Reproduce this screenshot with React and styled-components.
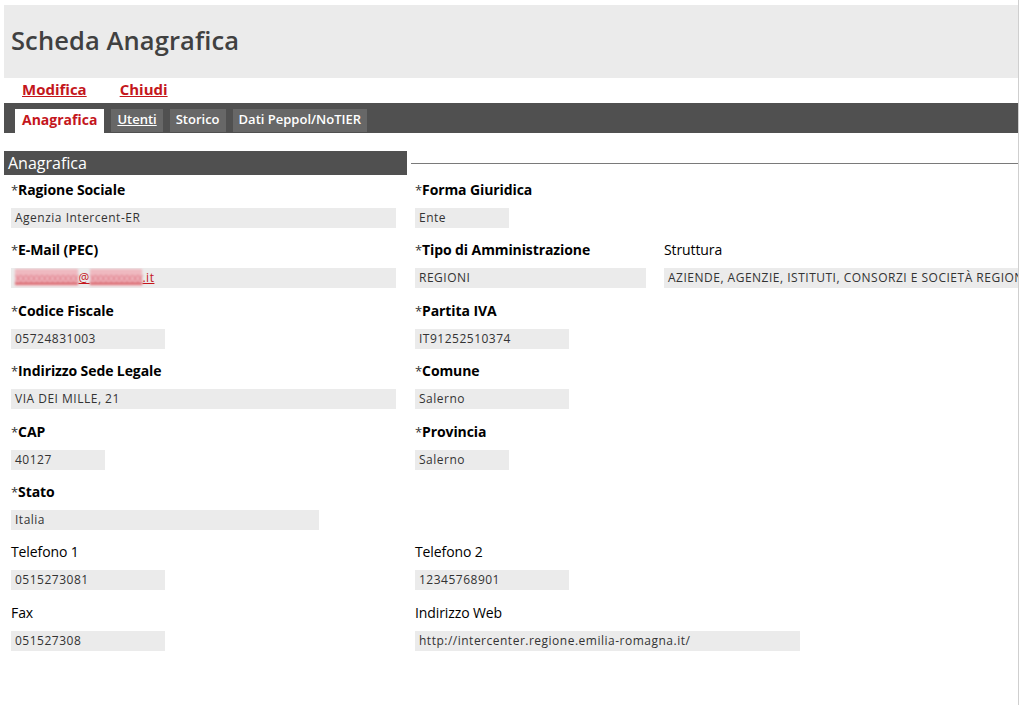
import React from "react";
import styled, { createGlobalStyle } from "styled-components";

const GlobalStyle = createGlobalStyle`
  html, body {
    margin: 0;
    padding: 0;
    background: #fff;
  }
  body {
    font-family: "Open Sans", "DejaVu Sans", sans-serif;
  }
`;

const Frame = styled.div`
  width: 1019px;
  height: 705px;
  padding: 5px 0 0 4px;
  box-sizing: border-box;
  border-right: 1px solid #cfcfcf;
  overflow: hidden;
`;

const Header = styled.div`
  height: 73px;
  background: #ebebeb;
  display: flex;
  align-items: center;
  padding: 0 7px 4px;
  box-sizing: border-box;
`;

const Title = styled.h1`
  margin: 0;
  font-size: 25.5px;
  font-weight: 600;
  color: #404040;
  letter-spacing: 0.1px;
`;

const Actions = styled.div`
  height: 25px;
  display: flex;
  align-items: center;
  gap: 33px;
  padding: 0 0 3px 18px;
  box-sizing: border-box;
`;

const ActionLink = styled.a`
  color: #c4161c;
  font-size: 15px;
  font-weight: 700;
  text-decoration: underline;
  cursor: pointer;
`;

const TabBar = styled.div`
  height: 30px;
  background: #505050;
  display: flex;
  align-items: flex-end;
  gap: 7px;
  padding: 0 0 0 11px;
  box-sizing: border-box;
`;

const Tab = styled.div`
  height: ${({ $active }) => ($active ? "24px" : "23px")};
  margin-bottom: ${({ $active }) => ($active ? "0" : "1px")};
  padding: ${({ $active }) => ($active ? "0 7px 3px" : "0 6px 3px")};
  display: flex;
  align-items: center;
  background: ${({ $active }) => ($active ? "#fff" : "#676767")};
  color: ${({ $active }) => ($active ? "#c4161c" : "#fff")};
  font-size: ${({ $active }) => ($active ? "14px" : "13px")};
  font-weight: ${({ $active }) => ($active ? 700 : 600)};
  text-decoration: ${({ $link }) => ($link ? "underline" : "none")};
  box-sizing: border-box;
`;

const SectionRow = styled.div`
  margin-top: 18px;
  display: flex;
  align-items: center;
  gap: 4px;
`;

const SectionTitle = styled.div`
  width: 403px;
  height: 24px;
  background: #505050;
  color: #fff;
  font-size: 16px;
  padding-left: 4px;
  box-sizing: border-box;
  display: flex;
  align-items: center;
  flex-shrink: 0;
`;

const SectionRule = styled.div`
  flex: 1;
  height: 1px;
  background: #7a7a7a;
`;

const Grid = styled.div`
  display: grid;
  grid-template-columns: 404px 249px 1fr;
  padding: 5px 0 0 7px;
`;

const Field = styled.div`
  height: 60.4px;
  grid-column: ${({ $col }) => $col} / span ${({ $span }) => $span || 1};
  min-width: 0;
`;

const Label = styled.div`
  height: 20px;
  line-height: 20px;
  font-size: 14px;
  font-weight: ${({ $bold }) => ($bold ? 700 : 400)};
  color: #000;
  white-space: nowrap;
  letter-spacing: -0.1px;
`;

const Star = styled.span`
  font-weight: 400;
  color: #333;
  font-size: 13px;
`;

const Value = styled.div`
  margin-top: 8px;
  width: ${({ $w }) => $w}px;
  height: 20px;
  background: #ebebeb;
  font-size: 12px;
  color: #333;
  letter-spacing: 0.5px;
  line-height: 20px;
  padding-left: 4px;
  box-sizing: border-box;
  white-space: nowrap;
  overflow: hidden;
`;

const MailLink = styled.a`
  color: #c4161c;
  text-decoration: underline;
`;

const Blur = styled.span`
  color: #e07a86;
  background: #efb9c0;
  filter: blur(1.2px);
  letter-spacing: -1px;
`;

const fields = [
  { col: 1, label: "Ragione Sociale", req: true, value: "Agenzia Intercent-ER", w: 385 },
  { col: 2, label: "Forma Giuridica", req: true, value: "Ente", w: 94 },
  { col: 1, label: "E-Mail (PEC)", req: true, mail: true, w: 385 },
  { col: 2, label: "Tipo di Amministrazione", req: true, value: "REGIONI", w: 231 },
  { col: 3, label: "Struttura", value: "AZIENDE, AGENZIE, ISTITUTI, CONSORZI E SOCIETÀ REGION", w: 354 },
  { col: 1, label: "Codice Fiscale", req: true, value: "05724831003", w: 154 },
  { col: 2, label: "Partita IVA", req: true, value: "IT91252510374", w: 154 },
  { col: 1, label: "Indirizzo Sede Legale", req: true, value: "VIA DEI MILLE, 21", w: 385 },
  { col: 2, label: "Comune", req: true, value: "Salerno", w: 154 },
  { col: 1, label: "CAP", req: true, value: "40127", w: 94 },
  { col: 2, label: "Provincia", req: true, value: "Salerno", w: 94 },
  { col: 1, label: "Stato", req: true, value: "Italia", w: 308 },
  { col: 1, label: "Telefono 1", value: "0515273081", w: 154 },
  { col: 2, label: "Telefono 2", value: "12345768901", w: 154 },
  { col: 1, label: "Fax", value: "051527308", w: 154 },
  { col: 2, span: 2, label: "Indirizzo Web", value: "http://intercenter.regione.emilia-romagna.it/", w: 385 },
];

export default function App() {
  return (
    <>
      <GlobalStyle />
      <Frame>
        <Header>
          <Title>Scheda Anagrafica</Title>
        </Header>
        <Actions>
          <ActionLink>Modifica</ActionLink>
          <ActionLink>Chiudi</ActionLink>
        </Actions>
        <TabBar>
          <Tab $active>Anagrafica</Tab>
          <Tab $link>Utenti</Tab>
          <Tab>Storico</Tab>
          <Tab>Dati Peppol/NoTIER</Tab>
        </TabBar>
        <SectionRow>
          <SectionTitle>Anagrafica</SectionTitle>
          <SectionRule />
        </SectionRow>
        <Grid>
          {fields.map((f, i) => (
            <Field key={i} $col={f.col} $span={f.span}>
              <Label $bold={f.req}>
                {f.req && <Star>*</Star>}
                {f.label}
              </Label>
              <Value $w={f.w}>
                {f.mail ? (
                  <MailLink>
                    <Blur>xxxxxxxxxxxx</Blur>@<Blur>xxxxxxxxxx</Blur>.it
                  </MailLink>
                ) : (
                  f.value
                )}
              </Value>
            </Field>
          ))}
        </Grid>
      </Frame>
    </>
  );
}
